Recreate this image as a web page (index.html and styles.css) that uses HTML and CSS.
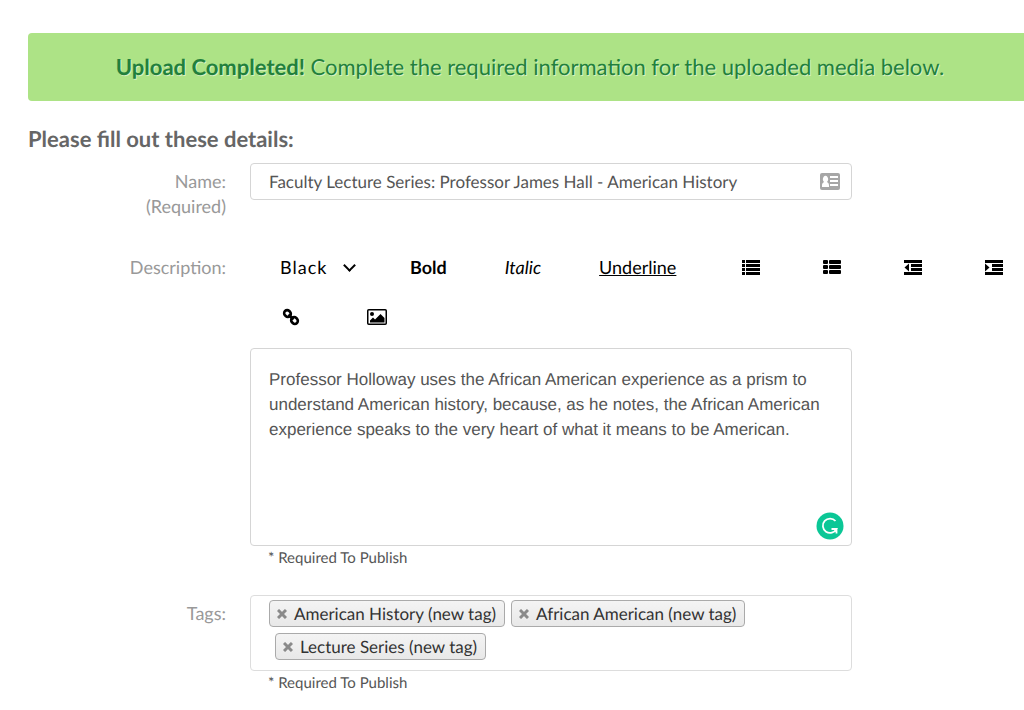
FILE: index.html
```html
<!DOCTYPE html>
<html lang="en">
<head>
  <meta charset="UTF-8" />
  <meta name="viewport" content="width=device-width, initial-scale=1" />
  <title>Upload Media</title>
  <link rel="stylesheet" href="styles.css">
</head>
<body>
  <main>
    <div class="alert" role="status"><strong>Upload Completed!</strong> Complete the required information for the uploaded media below.</div>

    <h1>Please fill out these details:</h1>

    <form>
      <div class="row">
        <label for="name">Name:<br>(Required)</label>
        <div class="field">
          <input type="text" id="name" value="Faculty Lecture Series: Professor James Hall - American History" />
          <svg class="card-icon" viewBox="0 0 20 17" width="20" height="17">
            <rect width="20" height="17" rx="2" fill="#a6a6a6"/>
            <path d="M2 14v-2q0-2 2-3a2.500 3.500 0 1 1 3 0q2 1 2 3v2zM10 3h8v2h-8zM10 7h8v2h-8zM10 11h8v2h-8z" fill="#fff"/>
          </svg>
        </div>
      </div>

      <div class="row row-description">
        <label for="description">Description:</label>
        <div>
          <div class="toolbar">
            <div class="group">
              <select class="color" aria-label="Text colour">
                <option>Black</option>
                <option>Red</option>
                <option>Green</option>
                <option>Blue</option>
              </select>
            </div>
            <div class="group">
              <button type="button" class="bold">Bold</button>
              <button type="button" class="italic">Italic</button>
              <button type="button" class="underline">Underline</button>
            </div>
            <div class="group icons">
              <button type="button" aria-label="Unordered list">
                <svg viewBox="0 0 18 15" width="18" height="15"><path d="M0 0h3v3H0zM4 0h14v3H4zM0 4h3v3H0zM4 4h14v3H4zM0 8h3v3H0zM4 8h14v3H4zM0 12h3v3H0zM4 12h14v3H4z"/></svg>
              </button>
              <button type="button" aria-label="Ordered list">
                <svg viewBox="0 0 18 15" width="18" height="15"><rect width="5" height="4" rx="1"/><rect x="6" width="12" height="4" rx="1"/><rect y="5" width="5" height="4" rx="1"/><rect x="6" y="5" width="12" height="4" rx="1"/><rect y="10" width="5" height="4" rx="1"/><rect x="6" y="10" width="12" height="4" rx="1"/></svg>
              </button>
              <button type="button" aria-label="Outdent">
                <svg viewBox="0 0 18 15" width="18" height="15"><path d="M0 0h18v3H0zM7 4h11v3H7zM7 8h11v3H7zM0 12h18v3H0zM5 3.500v8L.5 7.500z"/></svg>
              </button>
              <button type="button" aria-label="Indent">
                <svg viewBox="0 0 18 15" width="18" height="15"><path d="M0 0h18v3H0zM7 4h11v3H7zM7 8h11v3H7zM0 12h18v3H0zM0 3.500v8l4.500-4z"/></svg>
              </button>
            </div>
            <div class="group icons">
              <button type="button" aria-label="Insert link">
                <svg viewBox="0 0 18 18" width="18" height="18" fill="none" stroke="#000" stroke-width="2.600"><rect x="2" y="2.500" width="7" height="6" rx="3" transform="rotate(45 5.500 5.500)"/><rect x="9" y="9.500" width="7" height="6" rx="3" transform="rotate(45 12.500 12.500)"/><path d="M6.500 6.500l5 5"/></svg>
              </button>
            </div>
            <div class="group icons">
              <button type="button" aria-label="Insert image">
                <svg viewBox="0 0 20 16" width="20" height="16"><rect x=".75" y=".75" width="18.500" height="14.500" rx="1" fill="none" stroke="#000" stroke-width="1.500"/><circle cx="5" cy="5" r="2"/><path d="M3 13.500v-2l3-3 2 2 5.500-5.500 4 4v4.500z"/></svg>
              </button>
            </div>
          </div>
          <div class="field">
            <textarea id="description">Professor Holloway uses the African American experience as a prism to understand American history, because, as he notes, the African American experience speaks to the very heart of what it means to be American.</textarea>
            <svg class="checker" viewBox="0 0 28 28" width="28" height="28">
              <circle cx="14" cy="14" r="13.500" fill="#0bc796"/>
              <path d="M19.500 9A7.200 7.200 0 1 0 20.500 17H15.500M20.500 16V21.500" fill="none" stroke="#fff" stroke-width="1.800"/>
            </svg>
          </div>
          <p class="hint">* Required To Publish</p>
        </div>
      </div>

      <div class="row">
        <span class="label" id="tagsLabel">Tags:</span>
        <div>
          <ul class="tags" aria-labelledby="tagsLabel">
            <li><button type="button" aria-label="Remove American History"><svg viewBox="0 0 10 10" width="10" height="10"><path d="M1 1l8 8M9 1l-8 8"/></svg></button>American History (new tag)</li>
            <li><button type="button" aria-label="Remove African American"><svg viewBox="0 0 10 10" width="10" height="10"><path d="M1 1l8 8M9 1l-8 8"/></svg></button>African American (new tag)</li>
            <li><button type="button" aria-label="Remove Lecture Series"><svg viewBox="0 0 10 10" width="10" height="10"><path d="M1 1l8 8M9 1l-8 8"/></svg></button>Lecture Series (new tag)</li>
          </ul>
          <p class="hint">* Required To Publish</p>
        </div>
      </div>
    </form>
  </main>
</body>
</html>
```
FILE: styles.css
```css
* {
  box-sizing: border-box;
  text-rendering: geometricPrecision;
}
body {
  margin: 0;
  background-color: #fff;
  color: #555;
  font-family: Lato, sans-serif;
  font-size: 18px;
  line-height: 25px;
  overflow-x: hidden;
}
main {
  margin: 33px -8px 24px 28px;
}
.alert {
  padding: 20px;
  border-radius: 4px;
  background-color: #ade386;
  color: #22803c;
  font-size: 22px;
  line-height: 28px;
  text-align: center;
  text-shadow: 1px 1px 0 rgba(255, 255, 255, 0.5);
}
h1 {
  margin: 25px 0 11px;
  color: #666;
  font-size: 22px;
  line-height: 26px;
}
.row {
  display: grid;
  grid-template-columns: 198px 1fr;
  column-gap: 24px;
  margin-bottom: 24px;
}
label,
.label {
  padding-top: 6px;
  color: #999;
  text-align: right;
}
.row-description label {
  padding-top: 12px;
}
.field {
  position: relative;
  width: 77%;
}
input,
textarea {
  display: block;
  width: 100%;
  border: 1px solid #d5d5d5;
  border-radius: 4px;
  background-color: #fff;
  color: #555;
}
input {
  height: 37px;
  padding: 0 48px 0 18px;
  font: 17px/25px Lato, sans-serif;
}
textarea {
  height: 198px;
  padding: 18px 14px 18px 18px;
  font: 17px/25px "Liberation Sans", Arial, sans-serif;
  resize: none;
}
.card-icon {
  position: absolute;
  top: 10px;
  right: 12px;
}
.checker {
  position: absolute;
  right: 8px;
  bottom: 6px;
}
.toolbar {
  display: flex;
  flex-wrap: wrap;
  column-gap: 5px;
  margin-right: -24px;
  margin-bottom: 7px;
}
.group {
  display: flex;
}
.toolbar button,
.color {
  height: 49px;
  padding: 0 29px;
  border: 0;
  background: none;
  color: #000;
  font: 18px/25px Lato, sans-serif;
  cursor: pointer;
}
.toolbar .color {
  width: 126px;
  padding: 0 30px;
  appearance: none;
  letter-spacing: 1px;
}
.group:first-child {
  position: relative;
}
.group:first-child::after {
  content: "";
  position: absolute;
  top: 18px;
  right: 22px;
  width: 7px;
  height: 7px;
  border: solid #000;
  border-width: 0 2px 2px 0;
  transform: rotate(45deg);
  pointer-events: none;
}
.toolbar .bold {
  font-weight: bold;
}
.toolbar .italic {
  font-style: italic;
}
.toolbar .underline {
  text-decoration: underline;
}
.toolbar .icons button {
  display: flex;
  align-items: center;
  justify-content: center;
  width: 81px;
}
.hint {
  margin: 0 0 0 18px;
  font-size: 15px;
}
.tags {
  display: flex;
  flex-wrap: wrap;
  gap: 6px 0;
  width: 77%;
  margin: 0;
  padding: 4px 18px 10px;
  border: 1px solid #ddd;
  border-radius: 4px;
  list-style: none;
}
.tags li {
  display: flex;
  align-items: center;
  height: 27px;
  padding: 0 8px 0 7px;
  border: 1px solid #aaa;
  border-radius: 4px;
  background: linear-gradient(#f4f4f4, #e8e8e8);
  color: #333;
  font-size: 17px;
}
.tags li + li {
  margin-left: 6px;
}
.tags button {
  display: flex;
  margin-right: 7px;
  padding: 0;
  border: 0;
  background: none;
  cursor: pointer;
}
.tags svg {
  stroke: #8a8a8a;
  stroke-width: 3;
}
```
